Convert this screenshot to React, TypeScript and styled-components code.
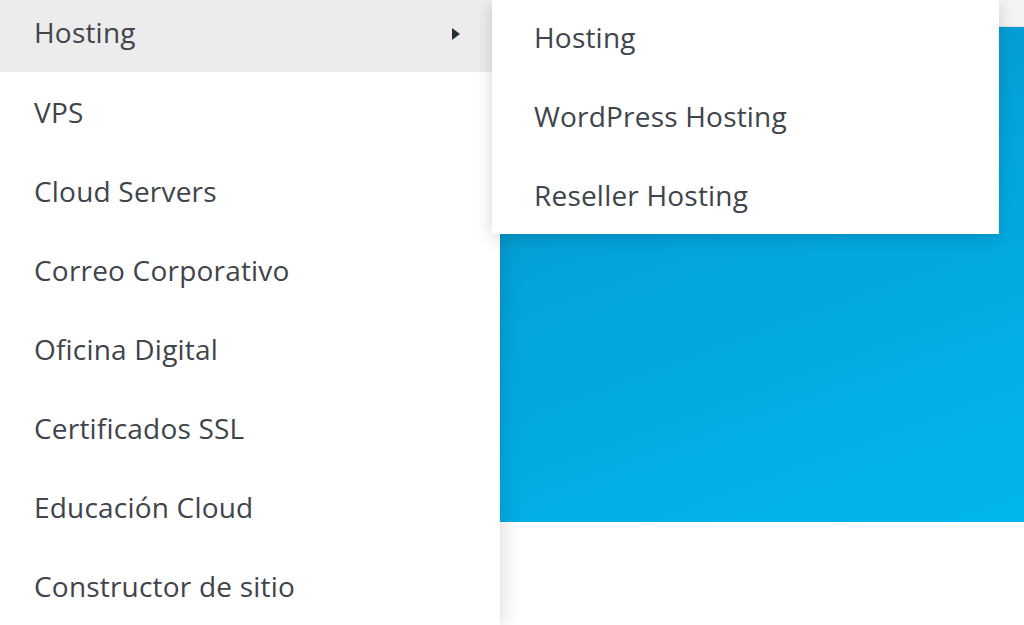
import React from "react";
import styled, { createGlobalStyle } from "styled-components";

const Global = createGlobalStyle`
  html, body { margin: 0; padding: 0; background: #ffffff; overflow: hidden; }
  #root { width: 1024px; height: 625px; }
`;

const Page = styled.div`
  position: relative;
  display: flex;
  width: 1024px;
  height: 625px;
  overflow: hidden;
  font-family: "Open Sans", "Liberation Sans", sans-serif;
`;

const Sidebar = styled.nav`
  width: 500px;
  flex: none;
  background: #ffffff;
  box-shadow: 4px 0 18px rgba(0, 0, 0, 0.12);
  position: relative;
  z-index: 2;
  display: flex;
  flex-direction: column;
  margin-top: -8px;
`;

const MenuRow = styled.div<{ $active?: boolean }>`
  height: 79px;
  flex: none;
  display: flex;
  align-items: center;
  justify-content: space-between;
  padding: 0 40px 0 34px;
  background: ${(p) => (p.$active ? "#ececec" : "transparent")};
  color: #40444b;
  font-size: 28px;
  font-weight: 400;
  letter-spacing: 0.2px;
  &:first-child { height: 80px; }
`;

const Caret = styled.span`
  width: 0;
  height: 0;
  border-top: 6px solid transparent;
  border-bottom: 6px solid transparent;
  border-left: 8px solid #2a2e35;
  margin-top: 4px;
`;

const Main = styled.main`
  flex: 1;
  display: flex;
  flex-direction: column;
`;

const TopStrip = styled.div`
  height: 26px;
  background: #f4f4f4;
  border-bottom: 1px solid #e2e2e2;
`;

const Hero = styled.div`
  height: 495px;
  background: linear-gradient(160deg, #0a8fca 0%, #03a6de 45%, #00b6ec 100%);
`;

const Flyout = styled.div`
  position: absolute;
  left: 492px;
  top: 0;
  width: 507px;
  height: 234px;
  background: #ffffff;
  box-shadow: 0 4px 16px rgba(0, 0, 0, 0.16);
  z-index: 3;
  display: flex;
  flex-direction: column;
  box-sizing: border-box;
`;

const FlyoutRow = styled.div`
  height: 79px;
  flex: none;
  display: flex;
  align-items: center;
  padding-left: 42px;
  color: #40444b;
  font-size: 28px;
  font-weight: 400;
  letter-spacing: 0.2px;
  &:first-child { margin-top: -3px; }
`;

const items = [
  "Hosting",
  "VPS",
  "Cloud Servers",
  "Correo Corporativo",
  "Oficina Digital",
  "Certificados SSL",
  "Educación Cloud",
  "Constructor de sitio",
];

const subItems = ["Hosting", "WordPress Hosting", "Reseller Hosting"];

export default function App() {
  return (
    <>
      <Global />
      <Page>
        <Sidebar>
          {items.map((label, i) => (
            <MenuRow key={label} $active={i === 0}>
              <span>{label}</span>
              {i === 0 && <Caret />}
            </MenuRow>
          ))}
        </Sidebar>
        <Main>
          <TopStrip />
          <Hero />
        </Main>
        <Flyout>
          {subItems.map((s) => (
            <FlyoutRow key={s}>{s}</FlyoutRow>
          ))}
        </Flyout>
      </Page>
    </>
  );
}
